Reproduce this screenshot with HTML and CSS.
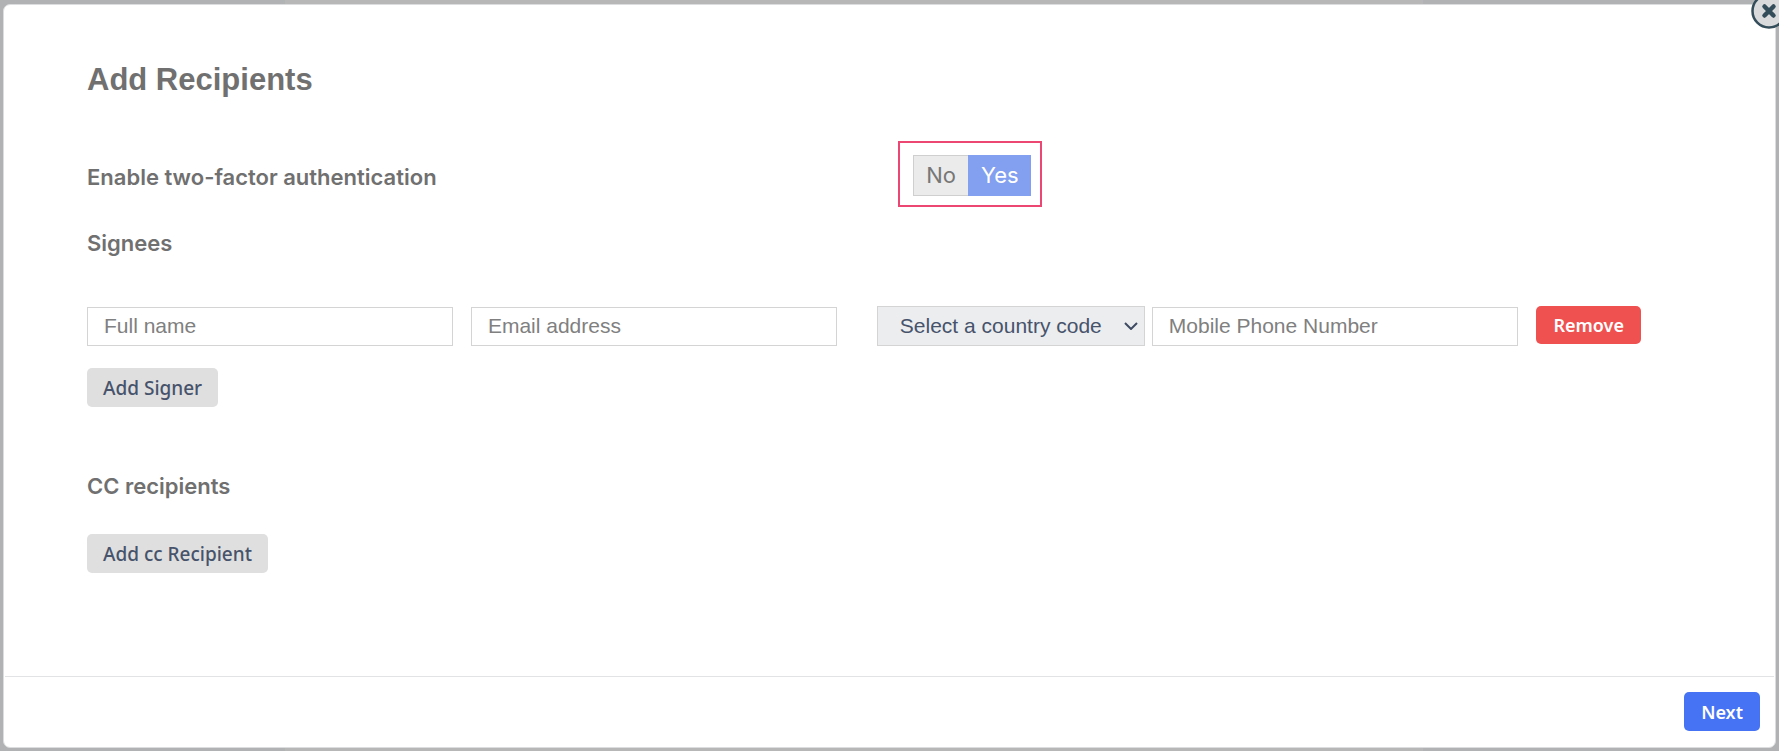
FILE: index.html
```
<!DOCTYPE html>
<html lang="en">

<head>
    <meta charset="UTF-8">
    <title>Add Recipients</title>
    <link rel="stylesheet" href="styles.css">
</head>

<body>
    <div class="modal" role="dialog" aria-labelledby="modal-title">
        <button type="button" class="close" aria-label="Close">
            <svg viewBox="0 0 36 36" width="36" height="36">
                <circle cx="18" cy="18" r="16.500" fill="#d9dadb" stroke="#344d5b" stroke-width="2.500" />
                <path d="M13.500 13.500L22.500 22.500M22.500 13.500L13.500 22.500" stroke="#344d5b" stroke-width="4.500" stroke-linecap="round" />
            </svg>
        </button>
        <form class="modal-form">
            <div class="modal-body">
                <h1 id="modal-title">Add Recipients</h1>

                <div class="two-factor">
                    <h2 id="two-factor-label">Enable two-factor authentication</h2>
                    <div class="toggle-box">
                        <div class="toggle" role="group" aria-labelledby="two-factor-label">
                            <button type="button" class="toggle-no" aria-pressed="false">No</button>
                            <button type="button" class="toggle-yes" aria-pressed="true">Yes</button>
                        </div>
                    </div>
                </div>

                <h2 class="signees-title">Signees</h2>
                <div class="signer">
                    <input type="text" name="name" placeholder="Full name" aria-label="Full name">
                    <input type="email" name="email" placeholder="Email address" aria-label="Email address">
                    <div class="phone">
                        <div class="select-wrap">
                            <select name="country" aria-label="Country code">
                                <option>Select a country code</option>
                            </select>
                            <svg class="chevron" viewBox="0 0 14 8" width="14" height="8">
                                <path d="M1 1L7 7L13 1" fill="none" stroke="#3f4b62" stroke-width="2" />
                            </svg>
                        </div>
                        <input type="tel" name="phone" placeholder="Mobile Phone Number" aria-label="Mobile Phone Number">
                    </div>
                    <button type="button" class="btn btn-remove">Remove</button>
                </div>
                <button type="button" class="btn">Add Signer</button>

                <h2 class="cc-title">CC recipients</h2>
                <button type="button" class="btn">Add cc Recipient</button>
            </div>
            <div class="modal-footer">
                <button type="submit" class="btn btn-next">Next</button>
            </div>
        </form>
    </div>
</body>

</html>
```

FILE: styles.css
```
* {
    box-sizing: border-box;
}

body {
    display: flex;
    min-height: 100vh;
    margin: 0;
    padding: 4px 3px 3px;
    overflow-x: hidden;
    font-family: "Liberation Sans", Arial, sans-serif;
    color: #707070;
    background: linear-gradient(90deg, #b1b2b4 16%, #b7b7b7 16%, #b7b7b7 80%, #b1b2b4 80%);
}

.modal {
    position: relative;
    display: flex;
    flex: 1;
    min-width: 0;
    border: 1px solid #dcdddf;
    border-radius: 7px;
    background-color: #ffffff;
}

.close {
    position: absolute;
    top: -12px;
    right: -12px;
    width: 36px;
    height: 36px;
    padding: 0;
    border: none;
    background: none;
    cursor: pointer;
}

.close svg {
    display: block;
}

.modal-form {
    display: flex;
    flex-direction: column;
    flex: 1;
    min-width: 0;
}

.modal-body {
    flex: 1;
    padding: 56px 134px 40px 83px;
}

h1 {
    margin: 0;
    font-size: 31px;
    line-height: 38px;
}

h2 {
    margin: 0;
    font-family: Inter, sans-serif;
    font-size: 22px;
    font-weight: 600;
    line-height: 28px;
}

.two-factor {
    display: grid;
    grid-template-columns: 52.2% 1fr;
    align-items: center;
    margin-top: 42px;
}

.two-factor h2 {
    padding-top: 6px;
}

.toggle-box {
    justify-self: start;
    padding: 12px 9px 9px 13px;
    border: 2px solid #ec4673;
}

.toggle {
    display: flex;
}

.toggle button {
    height: 41px;
    padding: 0 12px 2px;
    border: 1px solid #cfcfcf;
    border-right: none;
    font-family: Inter, sans-serif;
    font-size: 22px;
    color: #777777;
    background-color: #ebebeb;
    cursor: pointer;
}

.toggle .toggle-yes {
    border-color: #839ff0;
    color: #ffffff;
    background-color: #839ff0;
}

.signees-title {
    margin-top: 22px;
}

.signer {
    display: flex;
    align-items: flex-end;
    gap: 18px;
    margin: 49px 0 22px;
}

.signer input {
    flex: 1;
    min-width: 0;
    height: 39px;
    padding: 0 16px 2px;
    border: 1px solid #d4d4d4;
    font-family: inherit;
    font-size: 21px;
}

.signer input::placeholder {
    color: #808080;
}

.phone {
    display: flex;
    align-items: flex-end;
    flex: 0 0 auto;
    gap: 7px;
    width: calc(42% - 11px);
    margin-left: 22px;
}

.select-wrap {
    position: relative;
}

.phone select {
    display: block;
    width: 268px;
    height: 40px;
    padding: 0 30px 2px 22px;
    border: 1px solid #d4d4d4;
    border-radius: 0;
    font-family: inherit;
    font-size: 21px;
    color: #47536b;
    background-color: #ebedef;
    appearance: none;
}

.chevron {
    position: absolute;
    top: 16px;
    right: 7px;
    pointer-events: none;
}

.btn {
    height: 39px;
    padding: 0 16px;
    border: none;
    border-radius: 5px;
    font-family: "Noto Sans", sans-serif;
    font-size: 19px;
    font-weight: 500;
    color: #47536b;
    background-color: #dfdfdf;
    cursor: pointer;
}

.btn-remove,
.btn-next {
    padding: 0 17px;
    font-size: 18px;
    font-weight: 600;
    color: #ffffff;
}

.btn-remove {
    align-self: flex-start;
    height: 38px;
    background-color: #ef5050;
}

.btn-next {
    background-color: #4673f3;
}

.cc-title {
    margin: 65px 0 34px;
}

.modal-footer {
    display: flex;
    justify-content: flex-end;
    margin: 0 1px;
    padding: 15px 14px 16px;
    border-top: 1px solid #e2e3e4;
}
```
